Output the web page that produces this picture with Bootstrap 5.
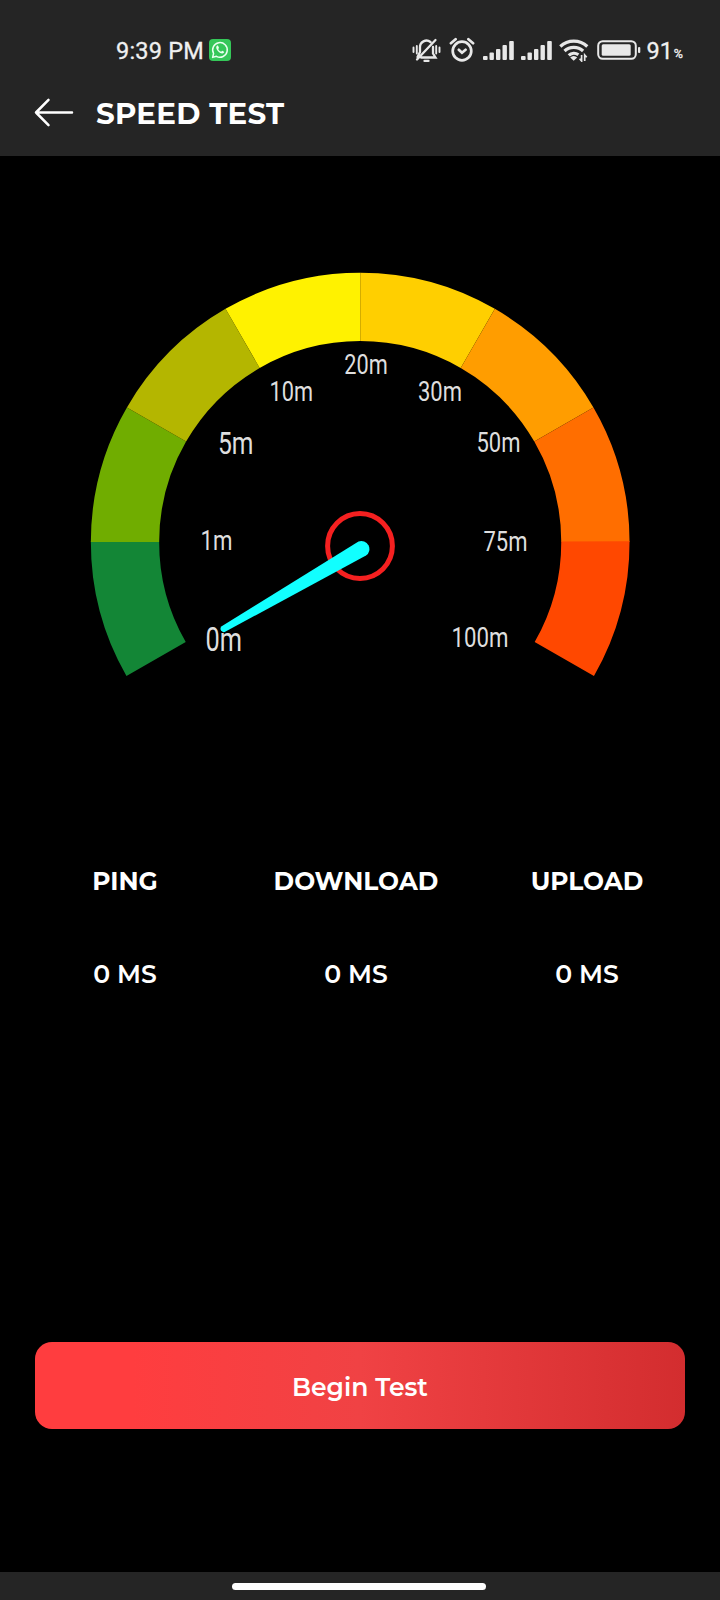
<!DOCTYPE html>
<html lang="en">
<head>
<meta charset="utf-8">
<meta name="viewport" content="width=device-width, initial-scale=1">
<title>Speed Test</title>
<link rel="stylesheet" href="https://cdn.jsdelivr.net/npm/bootstrap@5.3.0/dist/css/bootstrap.min.css">
<style>
  body { background: #000; font-family: Montserrat, Inter, "Open Sans", sans-serif; line-height: 1; }
  .screen { width: 720px; height: 1600px; }
  .app-header { background: #252525; height: 156px; }
  .status-bar { height: 71px; padding: 29px 37px 0 116px; font-family: Roboto, sans-serif; font-size: 23.5px; color: #f0f0f0; -webkit-text-stroke: .3px #f0f0f0; }
  .status-bar svg { flex: none; display: block; }
  .clock { width: 93px; letter-spacing: .2px; white-space: nowrap; padding-top: 3px; }
  .charge { padding-top: 3px; margin-left: 5px; }
  .percent { font-size: 12.5px; padding-top: 9px; margin-left: 1px; }
  .bars-gap { margin-left: 7px; }
  .title-row { height: 85px; padding-left: 34px; }
  .title-row svg { margin-top: -2px; }
  .title-row h1 { font-size: 29.3px; margin: 0 0 0 21px; letter-spacing: .25px; }
  .gauge { height: 656px; }
  .gauge-labels { font-family: Roboto, sans-serif; font-size: 27px; fill: #dedede; }
  .gauge-labels .label-lg { font-size: 31px; }
  .gauge-labels .label-xl { font-size: 33px; }
  .stats { width: 693px; margin-left: 9.5px; }
  .stat-name { font-size: 24.9px; height: 139px; }
  .stat-value { font-size: 25.1px; height: 36px; margin-top: 11px; }
  .btn-begin { margin: 344px 35px 0; height: 87px; border-radius: 17px; font-size: 25px; color: #fff; padding-top: 10px;
    background: linear-gradient(90deg, #ff3d3f 0%, #ff3d3f 15%, #f04244 50%, #d32d2f 100%); }
  .nav-area { background: #252525; height: 28px; }
  .home-pill { width: 254px; height: 7px; margin-left: -3px; margin-top: 1px; }
</style>
</head>
<body>
<div class="screen d-flex flex-column overflow-hidden text-white">
  <header class="app-header">
    <div class="status-bar d-flex align-items-center">
      <span class="clock">9:39 PM</span>
      <svg width="22" height="22" viewBox="0 0 22 22"><rect width="22" height="22" rx="4" fill="#35c759"/><path d="M3.6 18.4l1-3.9a7.3 7.3 0 1 1 2.8 2.8z" fill="none" stroke="#eafff0" stroke-width="1.500" stroke-linejoin="round"/><path d="M8 6.8c-1.6 1.4-.4 4 1.3 5.7 1.700 1.700 4.300 2.900 5.700 1.100.4-.7 0-1.100-1.800-1.900l-1.100 1.100c-1.200-.5-2.300-1.500-2.900-2.800l.8-1-.8-2c-.3-.5-.8-.5-1.200-.2z" fill="#eafff0"/></svg>
      <div class="d-flex align-items-center ms-auto">
        <svg width="29" height="26" viewBox="0 0 29 26" fill="none" stroke="#e8e8e8" stroke-width="2.300" stroke-linecap="round"><path d="M9 20.500h14.500L21 16.500v-6.500M18.500 5a6.500 6.500 0 0 0-10.500 5.500V15l-2.500 5M5 22.500L23.500 3M12.500 23.900h4" /><path d="M1.500 10.500v4.500M4.800 9v7.500M24.200 9v7.500M27.500 10.500v4.500" stroke-width="1.900"/></svg>
        <svg class="ms-2" width="26" height="26" viewBox="0 0 26 26" fill="none" stroke="#e8e8e8" stroke-width="2.700" stroke-linecap="round"><circle cx="13" cy="14" r="9.300"/><path d="M9.800 12.800l3.200 3 3.600-3M1.900 6.200l4.700-4M24.100 6.200l-4.700-4"/></svg>
        <svg class="ms-2" width="31" height="20" viewBox="0 0 31 20" fill="#e8e8e8"><rect y="16" width="4.600" height="4" rx="1"/><rect x="6.500" y="12.500" width="4.400" height="7.500" rx="1"/><rect x="13" y="9" width="4.400" height="11" rx="1"/><rect x="19.500" y="5" width="4.400" height="15" rx="1"/><rect x="26.200" y="1" width="4.600" height="19" rx="1"/></svg>
        <svg class="bars-gap" width="31" height="20" viewBox="0 0 31 20" fill="#e8e8e8"><rect y="16" width="4.600" height="4" rx="1"/><rect x="6.500" y="12.500" width="4.400" height="7.500" rx="1"/><rect x="13" y="9" width="4.400" height="11" rx="1"/><rect x="19.500" y="5" width="4.400" height="15" rx="1"/><rect x="26.200" y="1" width="4.600" height="19" rx="1"/></svg>
        <svg class="bars-gap" width="30" height="24" viewBox="0 0 30 24" fill="none" stroke="#e8e8e8" stroke-width="3.200"><path d="M1.300 8.500a19.500 19.500 0 0 1 27 0M5.500 13a13.500 13.500 0 0 1 18.600 0M9.800 17.300a7.500 7.500 0 0 1 9.600-.6"/><path d="M14.700 22.700l-3.500-3.200a4.800 4.800 0 0 1 7 0z" fill="#e8e8e8" stroke="none"/><path d="M22.600 17v6l-2-2.200M25.700 23v-6l2 2.200" stroke-width="1.700"/></svg>
        <svg class="ms-2" width="44" height="20" viewBox="0 0 44 20"><rect x="1.200" y="1.200" width="37.600" height="17.600" rx="4.500" fill="none" stroke="#e8e8e8" stroke-width="2"/><rect x="4.700" y="4.300" width="29" height="11.400" rx="1.500" fill="#e8e8e8"/><rect x="41" y="7" width="2.300" height="6" rx="1" fill="#e8e8e8"/></svg>
        <span class="charge">91</span><span class="percent">%</span>
      </div>
    </div>
    <div class="title-row d-flex align-items-center">
      <svg width="41" height="30" viewBox="0 0 41 30" fill="none" stroke="#fff" stroke-width="2.500" stroke-linecap="round" stroke-linejoin="round"><path d="M38 14.500H2M14.500 1.800L2 14.500l12.500 12.700"/></svg>
      <h1 class="fw-bold">SPEED TEST</h1>
    </div>
  </header>

  <svg class="gauge d-block flex-shrink-0" width="720" height="656" viewBox="0 156 720 656">
    <g fill="none" stroke-width="68.300" stroke-dasharray="30 330" transform="translate(360.200 542.100)">
      <circle r="235.200" pathLength="360" transform="rotate(150.200)" stroke="#138636"/>
      <circle r="235.200" pathLength="360" transform="rotate(180)" stroke="#70ad00"/>
      <circle r="235.200" pathLength="360" transform="rotate(210)" stroke="#b4b600"/>
      <circle r="235.200" pathLength="360" transform="rotate(240)" stroke="#fff200"/>
      <circle r="235.200" pathLength="360" transform="rotate(270)" stroke="#ffcf00"/>
      <circle r="235.200" pathLength="360" transform="rotate(300)" stroke="#ff9d00"/>
      <circle r="235.200" pathLength="360" transform="rotate(330)" stroke="#ff6e00"/>
      <circle r="235.200" pathLength="360" transform="rotate(-.2)" stroke="#ff4800"/>
    </g>
    <g class="gauge-labels">
      <text class="label-xl" x="205.500" y="650.500" textLength="36.500" lengthAdjust="spacingAndGlyphs">0m</text>
      <text x="200.500" y="550" textLength="32" lengthAdjust="spacingAndGlyphs">1m</text>
      <text class="label-lg" x="218" y="453.500" textLength="35.500" lengthAdjust="spacingAndGlyphs">5m</text>
      <text x="269.500" y="401" textLength="43.500" lengthAdjust="spacingAndGlyphs">10m</text>
      <text x="344.300" y="374" textLength="43.500" lengthAdjust="spacingAndGlyphs">20m</text>
      <text x="418" y="401" textLength="44" lengthAdjust="spacingAndGlyphs">30m</text>
      <text x="476.500" y="451.500" textLength="44" lengthAdjust="spacingAndGlyphs">50m</text>
      <text x="483.500" y="550.500" textLength="44" lengthAdjust="spacingAndGlyphs">75m</text>
      <text x="451.500" y="646.500" textLength="57" lengthAdjust="spacingAndGlyphs">100m</text>
    </g>
    <circle cx="360" cy="546" r="32.400" fill="none" stroke="#f52020" stroke-width="5"/>
    <path d="M221.700 626.300L358.500 541.600A8 8 0 0 1 366 555.600L224.700 632A3.300 3.300 0 0 1 221.700 626.300z" fill="#1ff"/>
  </svg>

  <div class="stats row g-0 text-center">
    <div class="col"><div class="stat-name d-flex align-items-center justify-content-center fw-bold">PING</div><div class="stat-value fw-semibold">0 MS</div></div>
    <div class="col"><div class="stat-name d-flex align-items-center justify-content-center fw-bold">DOWNLOAD</div><div class="stat-value fw-semibold">0 MS</div></div>
    <div class="col"><div class="stat-name d-flex align-items-center justify-content-center fw-bold">UPLOAD</div><div class="stat-value fw-semibold">0 MS</div></div>
  </div>

  <button class="btn btn-begin border-0 fw-semibold flex-shrink-0" type="button">Begin Test</button>

  <footer class="nav-area mt-auto flex-shrink-0 d-flex align-items-center justify-content-center">
    <div class="home-pill bg-white rounded-pill"></div>
  </footer>
</div>
<script src="https://cdn.jsdelivr.net/npm/bootstrap@5.3.0/dist/js/bootstrap.bundle.min.js"></script>
</body>
</html>
